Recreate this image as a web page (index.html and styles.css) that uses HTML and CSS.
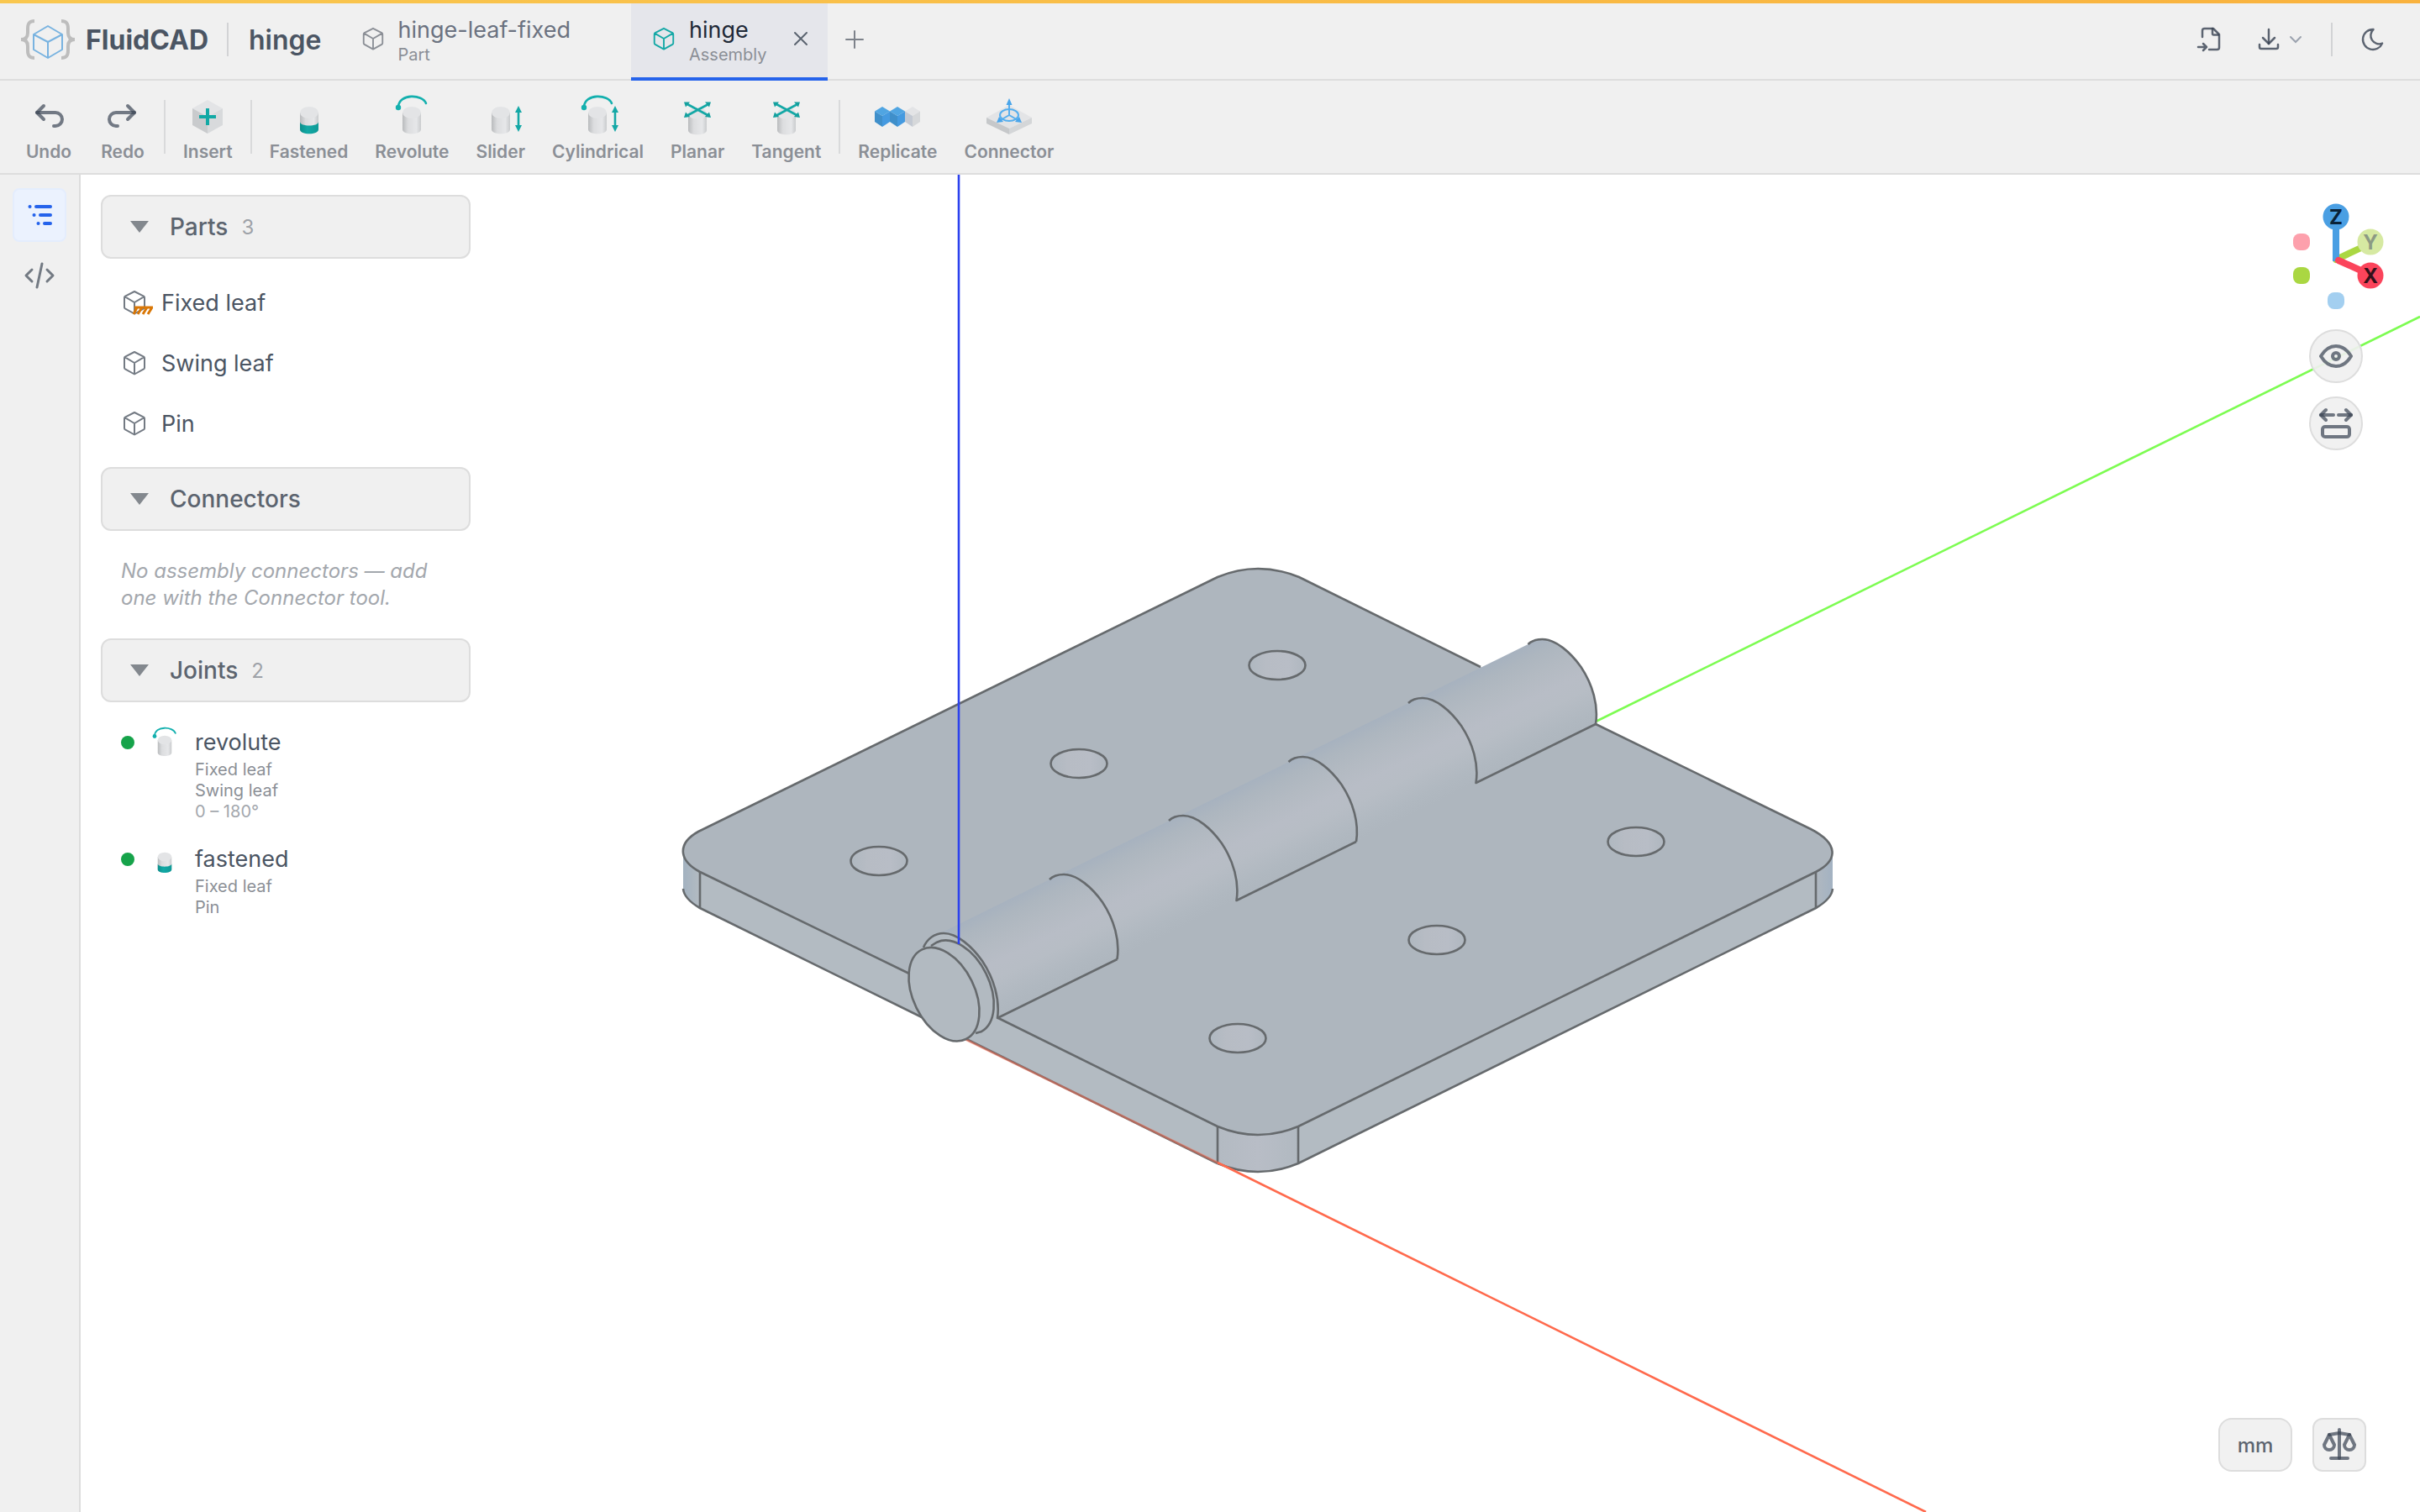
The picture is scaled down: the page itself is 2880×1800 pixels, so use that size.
FILE: index.html
```html
<!DOCTYPE html>
<html lang="en">
<head>
<meta charset="utf-8">
<title>hinge - FluidCAD</title>
<link rel="stylesheet" href="styles.css">
</head>
<body>
<svg class="defs" aria-hidden="true">
  <defs>
    <linearGradient id="metal" x1="0" x2="1" y1="0" y2="0">
      <stop offset="0" stop-color="#b9bbbd"/><stop offset=".3" stop-color="#dcdddf"/><stop offset=".75" stop-color="#e6e7e9"/><stop offset="1" stop-color="#c9cbcd"/>
    </linearGradient>
    <linearGradient id="teal" x1="0" x2="1" y1="0" y2="0">
      <stop offset="0" stop-color="#0c8f8c"/><stop offset=".4" stop-color="#12a9a5"/><stop offset="1" stop-color="#0f9a97"/>
    </linearGradient>
    <symbol id="cube" viewBox="0 0 32 32">
      <path fill="none" stroke="currentColor" stroke-width="2" stroke-linejoin="round" d="M16 3 27 8.600Q28 9.200 28 10.300V21.700Q28 22.800 27 23.400L16 29.500 5 23.400Q4 22.800 4 21.700V10.300Q4 9.200 5 8.600ZM4.500 9.200 16 16 27.500 9.200M16 16V29.500"/>
    </symbol>
    <symbol id="cylinder" viewBox="0 0 48 48">
      <path fill="url(#metal)" d="M13 20V40C13 47 35 47 35 40V20Z"/>
      <ellipse cx="24" cy="20" rx="11" ry="7" fill="#e3e4e6"/>
    </symbol>
    <symbol id="fasten" viewBox="0 0 48 48">
      <use href="#cylinder"/>
      <path fill="url(#teal)" d="M13 31C13 37 35 37 35 31V40C35 47 13 47 13 40Z"/>
    </symbol>
    <symbol id="cross" viewBox="0 0 48 48">
      <use href="#cylinder" y="1"/>
      <path fill="none" stroke="#14a8a6" stroke-width="2.600" d="M11 9.500 38 24M38 9.500 11 24"/>
      <path fill="#14a09e" d="M8 7.500H15L10 13.500ZM40 7.500H33L38 13.500ZM8 26 10 19.500 15 25ZM40 26 38 19.500 33 25Z"/>
    </symbol>
    <symbol id="caret" viewBox="0 0 24 16"><path fill="#83888e" d="M1 1H23L12 15Z"/></symbol>
  </defs>
</svg>

<header class="topbar">
  <div class="brand">
    <svg class="brand-mark" viewBox="0 0 66 50" fill="none" aria-hidden="true">
      <g stroke="#bdbdbd" stroke-width="4"><path d="M17 3C10 3 9 7 9 12V17C9 22 7 25 1 25C7 25 9 28 9 33V38C9 43 10 47 17 47"/><path d="M49 3C56 3 57 7 57 12V17C57 22 59 25 65 25C59 25 57 28 57 33V38C57 43 56 47 49 47"/></g>
      <path stroke="#79b3e0" stroke-width="2" stroke-linejoin="round" d="M33 9 50 19V37L33 47 16 37V19ZM16 19 33 28 50 19M33 28V47"/>
    </svg>
    <span class="brand-name">FluidCAD</span>
  </div>
  <span class="rule"></span>
  <h1 class="project">hinge</h1>
  <nav class="tabs" aria-label="Open files">
    <div class="tab">
      <svg class="tab-icon" aria-hidden="true"><use href="#cube"/></svg>
      <button class="tab-label"><span class="tab-name">hinge-leaf-fixed</span><span class="tab-kind">Part</span></button>
      <button class="tab-close" aria-label="Close hinge-leaf-fixed"><svg viewBox="0 0 24 24"><path d="M5 5 19 19M19 5 5 19"/></svg></button>
    </div>
    <div class="tab active">
      <svg class="tab-icon" aria-hidden="true"><use href="#cube"/></svg>
      <button class="tab-label"><span class="tab-name">hinge</span><span class="tab-kind">Assembly</span></button>
      <button class="tab-close" aria-label="Close hinge"><svg viewBox="0 0 24 24"><path d="M5 5 19 19M19 5 5 19"/></svg></button>
    </div>
    <button class="tab-add" aria-label="New tab"><svg viewBox="0 0 24 24"><path d="M12 2V22M2 12H22"/></svg></button>
  </nav>
  <div class="actions">
    <button aria-label="Import"><svg class="line" viewBox="0 0 32 32"><path d="M9 13V5.500A2.500 2.500 0 0 1 11.500 3H22L29 10V25.500A2.500 2.500 0 0 1 26.500 28H17"/><path d="M21 3V9A1.500 1.500 0 0 0 22.500 10.500H28"/><path d="M4 25H14M10 21 14 25 10 29"/></svg></button>
    <button class="export" aria-label="Export"><svg class="line" viewBox="0 0 32 32"><path d="M16 4V21"/><path d="M9 14 16 21 23 14"/><path d="M5 22V25A2 2 0 0 0 7 27H25A2 2 0 0 0 27 25V22"/></svg><svg class="chevron" viewBox="0 0 16 16"><path d="M2 5 8 11 14 5"/></svg></button>
    <span class="rule"></span>
    <button aria-label="Dark mode"><svg class="line moon" viewBox="0 0 24 24"><path d="M12 3c.132 0 .263 0 .393 0a7.500 7.500 0 0 0 7.920 12.446a9 9 0 1 1-8.313-12.454z"/></svg></button>
  </div>
</header>

<div class="toolbar" role="toolbar" aria-label="Assembly tools">
  <button class="tool"><svg class="arrow" viewBox="0 0 24 24"><path d="M9 14 5 10 9 6"/><path d="M5 10H16A4 4 0 1 1 16 18H15"/></svg><span>Undo</span></button>
  <button class="tool"><svg class="arrow" viewBox="0 0 24 24"><path d="M15 14 19 10 15 6"/><path d="M19 10H8A4 4 0 1 0 8 18H9"/></svg><span>Redo</span></button>
  <span class="split"></span>
  <button class="tool"><svg viewBox="0 0 48 48"><path fill="#e3e4e6" d="M24 5 42 15 24 25 6 15Z"/><path fill="#c9cbcd" d="M6 15 24 25V45L6 35Z"/><path fill="#d8dadc" d="M42 15 24 25V45L42 35Z"/><path stroke="#12a9a5" stroke-width="4" d="M24 15V35M14 25H34"/></svg><span>Insert</span></button>
  <span class="split"></span>
  <button class="tool"><svg><use href="#fasten"/></svg><span>Fastened</span></button>
  <button class="tool"><svg viewBox="0 0 48 48"><use href="#cylinder"/><path fill="none" stroke="#14b0ae" stroke-width="2.600" stroke-linecap="round" d="M8 13C9-3 37-2 41 9"/><circle cx="8" cy="14" r="3.200" fill="#14b0ae"/></svg><span>Revolute</span></button>
  <button class="tool"><svg viewBox="0 0 48 48"><use href="#cylinder"/><path stroke="#14a8a6" stroke-width="2.600" d="M45 17V39"/><path fill="#14a8a6" d="M45 12 49 20H41ZM45 43 49 35H41Z"/></svg><span>Slider</span></button>
  <button class="tool"><svg viewBox="0 0 48 48"><use href="#cylinder"/><path fill="none" stroke="#14b0ae" stroke-width="2.600" stroke-linecap="round" d="M8 13C9-3 37-2 41 9"/><circle cx="8" cy="14" r="3.200" fill="#14b0ae"/><path stroke="#14a8a6" stroke-width="2.600" d="M45 17V39"/><path fill="#14a8a6" d="M45 12 49 20H41ZM45 43 49 35H41Z"/></svg><span>Cylindrical</span></button>
  <button class="tool"><svg><use href="#cross"/></svg><span>Planar</span></button>
  <button class="tool"><svg><use href="#cross"/></svg><span>Tangent</span></button>
  <span class="split"></span>
  <button class="tool"><svg viewBox="0 0 48 48">
    <g><path fill="#e3e4e6" d="M42 13 51 18.500 42 24 33 18.500Z"/><path fill="#c3c9d3" d="M33 18.500 42 24V37L33 31Z"/><path fill="#d6d8da" d="M51 18.500 42 24V37L51 31Z"/></g>
    <g><path fill="#50a5e2" d="M24 13 33 18.500 24 24 15 18.500Z"/><path fill="#3f8fca" d="M15 18.500 24 24V37L15 31Z"/><path fill="#459ae0" d="M33 18.500 24 24V37L33 31Z"/></g>
    <g><path fill="#50a5e2" d="M6 13 15 18.500 6 24-3 18.500Z"/><path fill="#3f8fca" d="M-3 18.500 6 24V37L-3 31Z"/><path fill="#459ae0" d="M15 18.500 6 24V37L15 31Z"/></g>
  </svg><span>Replicate</span></button>
  <button class="tool"><svg viewBox="0 0 48 48"><path fill="#e3e4e6" d="M24 11 51 26 24 39-3 26Z"/><path fill="#c6c8ca" d="M-3 26 24 39V46L-3 33Z"/><path fill="#d4d6d8" d="M51 26 24 39V46L51 33Z"/><g fill="none" stroke="#55aeee" stroke-width="2"><ellipse cx="24" cy="23" rx="11" ry="7"/><path d="M24 23V8M24 23 12 30M24 23 36 30"/></g><path fill="#4aa5ea" d="M24 3 27.500 11H20.500ZM9 32 12 25 17 31ZM39 32 36 25 31 31Z"/></svg><span>Connector</span></button>
</div>

<div class="workspace">
  <nav class="rail" aria-label="Panels">
    <button class="rail-button active" aria-label="Assembly tree"><svg viewBox="0 0 32 32"><path d="M12 6H29M17 16H29M22 26H29M4.500 6H4.600M9.500 16H9.600M14.500 26H14.600"/></svg></button>
    <button class="rail-button" aria-label="Code"><svg viewBox="0 0 32 32"><path d="M7 9 0 16 7 23M25 9 32 16 25 23M19 2 13 30"/></svg></button>
  </nav>

  <main class="viewport">
    <svg class="scene" viewBox="96 208 2784 1592" preserveAspectRatio="xMidYMid slice" role="img" aria-label="Hinge assembly">
      <defs>
        <linearGradient id="barrel" gradientUnits="userSpaceOnUse" x1="1107" y1="1117" x2="1160" y2="1225">
          <stop offset="0" stop-color="#a7b2bf"/><stop offset=".12" stop-color="#adb6bf"/><stop offset=".3" stop-color="#b3bac2"/><stop offset=".5" stop-color="#b8bdc6"/><stop offset=".65" stop-color="#b7bdc5"/><stop offset=".88" stop-color="#b0b8c0"/><stop offset="1" stop-color="#aeb6be"/>
        </linearGradient>
        <linearGradient id="hole"><stop offset="0" stop-color="#afb8c0"/><stop offset=".3" stop-color="#b7bcc4"/><stop offset=".7" stop-color="#b8bdc6"/><stop offset="1" stop-color="#afb7bf"/></linearGradient>
        <linearGradient id="round"><stop offset="0" stop-color="#b3bac2"/><stop offset=".5" stop-color="#b8bdc6"/><stop offset="1" stop-color="#b1b9c1"/></linearGradient>
        <linearGradient id="sideLeft"><stop offset="0" stop-color="#a3b2c0"/><stop offset="1" stop-color="#b3bbc2"/></linearGradient>
        <linearGradient id="sideRight"><stop offset="0" stop-color="#b0b8c0"/><stop offset="1" stop-color="#a3b2c2"/></linearGradient>
      </defs>

      <path class="axis green" d="M1899 859 2880 377"/>
      <!-- plate sides -->
      <path fill="#b3bbc2" d="M833 1038 1190 1212 1449 1341H1545L2161 1038V1081L1545 1385H1449L1120 1223 833 1081Z"/>
      <path fill="url(#sideLeft)" d="M813 1014V1058Q814 1070 833 1081V1036Z"/>
      <path fill="url(#sideRight)" d="M2181 1014V1058Q2180 1070 2161 1081V1036Z"/>
      <path fill="url(#round)" d="M1449 1340V1385Q1497 1405 1545 1385V1340Z"/>
      <!-- plate top faces -->
      <path fill="#aeb6be" d="M833 1038C807 1024 806 1004 831 990L1449 687Q1497 667 1546 687L1762 794 1899 862 2155 987C2188 1004 2188 1024 2161 1038L1545 1341Q1497 1361 1449 1341L1188 1212 1082 1159Z"/>
      <path class="edge" d="M1082 1159 833 1038C807 1024 806 1004 831 990L1449 687Q1497 667 1546 687L1762 794M1899 862 2155 987C2188 1004 2188 1024 2161 1038L1545 1341Q1497 1361 1449 1341L1188 1212"/>
      <path class="edge" d="M1097 1211 833 1081Q814 1070 813 1058M1449 1385Q1497 1405 1545 1385L2161 1081Q2180 1070 2181 1058M833 1038V1081M2161 1038V1081M1449 1341V1385M1545 1341V1385"/>
      <path class="edge" d="M1140 1232 1449 1385"/>
      <path class="axis red" d="M1140 1233 1449 1384" opacity=".5"/>
      <path class="axis red" d="M1449 1384 2292 1800"/>
      <g class="edge" style="fill:url(#hole)">
        <ellipse cx="1046" cy="1025" rx="33.500" ry="17"/><ellipse cx="1284" cy="909" rx="33.500" ry="17"/><ellipse cx="1520" cy="792" rx="33.500" ry="17"/>
        <ellipse cx="1473" cy="1236" rx="33.500" ry="17"/><ellipse cx="1710" cy="1119" rx="33.500" ry="17"/><ellipse cx="1947" cy="1002" rx="33.500" ry="17"/>
      </g>
      <!-- barrel -->
      <path fill="#b3bbc2" d="M1099 1128C1103 1118 1112 1111 1123 1111c16 0 34 16 46 33 14 21 21 46 18 68L1150 1230Z"/>
      <path fill="url(#barrel)" d="M1107 1117 1818.500 767c5-5 11-6 17-6 16 0 34 16 46 33 14 21 21 46 17.500 68L1187 1212c3-22-4-47-18-68C1157 1127 1139 1111 1123 1111Z"/>
      <path class="edge" d="M1099 1128C1103 1118 1112 1111 1123 1111c16 0 34 16 46 33 14 21 21 46 18 68L1329.500 1142"/>
      <path class="edge" d="M1249 1047c5-5 11-6 17-6 16 0 34 16 46 33 14 21 21 46 17.500 68"/>
      <path class="edge" d="M1391 977c5-5 11-6 17-6 16 0 34 16 46 33 14 21 21 46 17.500 68L1614 1002"/>
      <path class="edge" d="M1533.500 907c5-5 11-6 17-6 16 0 34 16 46 33 14 21 21 46 17.500 68"/>
      <path class="edge" d="M1676 837c5-5 11-6 17-6 16 0 34 16 46 33 14 21 21 46 17.500 68L1899 862"/>
      <path class="edge" d="M1818.500 767c5-5 11-6 17-6 16 0 34 16 46 33 14 21 21 46 17.500 68"/>
      <!-- pin head -->
      <path fill="#b2bac1" d="M1097.300 1130.400 1108 1126 1115.100 1121.700A59.400 36.600 63.850 0 1 1167.500 1228.300L1149.700 1237Z"/>
      <path class="edge" d="M1108 1126 1115.100 1121.700A59.400 36.600 63.850 0 1 1167.500 1228.300L1161 1230"/>
      <ellipse class="edge" cx="1123.500" cy="1183.700" rx="59.400" ry="36.600" transform="rotate(63.850 1123.500 1183.700)" style="fill:#b2bac1"/>
      <path class="axis blue" d="M1141 208V1124"/>
    </svg>

    <aside class="tree">
      <section>
        <button class="group" aria-expanded="true"><svg class="caret"><use href="#caret"/></svg>Parts<span class="count">3</span></button>
        <ul class="parts">
          <li><svg viewBox="0 0 32 32"><use href="#cube"/><path fill="none" stroke="#d97706" stroke-width="3" d="M16 22H38M19 22 15 30M25 22 20 30M31 22 26 30M37 22 32 30"/></svg>Fixed leaf</li>
          <li><svg viewBox="0 0 32 32"><use href="#cube"/></svg>Swing leaf</li>
          <li><svg viewBox="0 0 32 32"><use href="#cube"/></svg>Pin</li>
        </ul>
      </section>
      <section>
        <button class="group" aria-expanded="true"><svg class="caret"><use href="#caret"/></svg>Connectors</button>
        <p class="empty">No assembly connectors — add one with the Connector tool.</p>
      </section>
      <section>
        <button class="group" aria-expanded="true"><svg class="caret"><use href="#caret"/></svg>Joints<span class="count">2</span></button>
        <ul class="joints">
          <li><span class="status"></span><svg viewBox="0 0 48 48"><use href="#cylinder"/><path fill="none" stroke="#14b0ae" stroke-width="2.600" stroke-linecap="round" d="M8 13C9-3 37-2 41 9"/><circle cx="8" cy="14" r="3.200" fill="#14b0ae"/></svg>
            <div><h2>revolute</h2><p>Fixed leaf</p><p>Swing leaf</p><p class="range">0 – 180°</p></div></li>
          <li><span class="status"></span><svg><use href="#fasten"/></svg>
            <div><h2>fastened</h2><p>Fixed leaf</p><p>Pin</p></div></li>
        </ul>
      </section>
    </aside>

    <div class="view-tools">
      <svg class="gizmo" viewBox="0 0 112 128" role="img" aria-label="View orientation">
        <g stroke-width="8" stroke-linecap="round"><path stroke="#aad742" d="M56 69 88 54"/><path stroke="#4a9fe3" stroke-linecap="butt" d="M56 71V18"/><path stroke="#fb445b" d="M59 70 90 84"/></g>
        <circle cx="56" cy="18" r="15.500" fill="#4a9fe3"/><circle cx="97" cy="48" r="15.500" fill="#d6e9a2"/><circle cx="97" cy="88" r="15.500" fill="#fb445b"/>
        <g><rect x="5" y="38" width="20" height="20" rx="8" fill="#fda0ac"/><rect x="5" y="78" width="20" height="20" rx="8" fill="#aad742"/><rect x="46" y="108" width="20" height="20" rx="8" fill="#a3cff0"/></g>
        <text x="56" y="27" fill="#0a2238">Z</text><text x="97" y="57" fill="#8c9a84">Y</text><text x="97" y="97" fill="#35101a">X</text>
      </svg>
      <button class="round-button" aria-label="Visibility"><svg class="bold" viewBox="0 0 24 24"><circle cx="12" cy="12" r="2"/><path d="M21 12C18.600 16 15.600 18 12 18C8.400 18 5.400 16 3 12C5.400 8 8.400 6 12 6C15.600 6 18.600 8 21 12Z"/></svg></button>
      <button class="round-button" aria-label="Exploded view"><svg class="bold" viewBox="0 0 24 24"><path d="M3 7H10.500M13.500 7H21"/><path d="M6 4 3 7 6 10M18 4 21 7 18 10"/><rect x="4" y="14" width="16" height="6" rx="1.500"/></svg></button>
    </div>

    <div class="units">
      <button class="unit">mm</button>
      <button class="scale" aria-label="Mass properties"><svg class="bold" viewBox="0 0 24 24"><path d="M7 20H17"/><path d="M6 6 12 5 18 6"/><path d="M12 3V20"/><path d="M9 12 6 6 3 12A3 3 0 0 0 9 12"/><path d="M21 12 18 6 15 12A3 3 0 0 0 21 12"/></svg></button>
    </div>
  </main>
</div>
</body>
</html>
```

FILE: styles.css
```css
* { box-sizing: border-box; }

body {
  margin: 0;
  min-height: 100vh;
  display: flex;
  flex-direction: column;
  background: #fff;
  color: #4b5563;
  font-family: Inter, "Liberation Sans", sans-serif;
  font-size: 27px;
}

button {
  margin: 0;
  padding: 0;
  border: 0;
  background: none;
  color: inherit;
  font: inherit;
  text-align: left;
  cursor: pointer;
}

h1, h2, p, ul { margin: 0; padding: 0; }
ul { list-style: none; }
svg { display: block; flex: none; overflow: visible; }
symbol { overflow: visible; }
.defs { position: absolute; width: 0; height: 0; }

/* Top bar */
.topbar {
  position: relative;
  display: flex;
  align-items: center;
  height: 96px;
  padding-left: 24px;
  padding-right: 40px;
  border-bottom: 2px solid #dddddd;
  background: #f0f0f0;
}
.topbar::before {
  content: "";
  position: absolute;
  inset: 0 0 auto;
  height: 4px;
  background: linear-gradient(90deg, #f9c74f, #f9b23e);
}
.brand { display: flex; align-items: center; gap: 12px; }
.brand-mark { width: 66px; height: 50px; }
.brand-name, .project {
  padding-top: 2px;
  font-size: 32px;
  line-height: 40px;
  font-weight: 700;
  color: #4b5563;
}
.project { font-weight: 600; }
.rule { width: 2px; height: 40px; background: #d2d3d5; }
.brand + .rule { margin: 0 24px 0 22px; }

.tabs { display: flex; align-self: stretch; margin-left: 22px; }
.tab {
  display: flex;
  align-items: center;
  margin-bottom: -2px;
  padding: 0 20px 0 24px;
  border-bottom: 4px solid transparent;
  color: #6b7280;
}
.tab-icon { width: 30px; height: 30px; margin-right: 15px; color: #8b8f96; }
.tab-label { display: flex; flex-direction: column; padding-top: 4px; }
.tab-name { line-height: 34px; }
.tab-kind { font-size: 20px; line-height: 24px; color: #8b8f96; }
.tab-close { margin-left: 28px; visibility: hidden; }
.tab-close svg { width: 24px; height: 24px; }
.tab-close path, .tab-add path { fill: none; stroke: #5b6470; stroke-width: 2; stroke-linecap: round; }
.tab.active { background: #e5e6eb; border-color: #2563eb; color: #1f2937; }
.tab.active .tab-icon { color: #14a8a6; }
.tab.active .tab-close { visibility: visible; }
.tab-add { padding: 0 20px; }
.tab-add svg { width: 24px; height: 24px; }
.tab-add path { stroke: #7d828a; }

.actions { display: flex; align-items: center; margin-left: auto; }
.actions button { display: flex; align-items: center; }
.actions .line { width: 32px; height: 32px; }
.export { gap: 8px; margin-left: 40px; }
.chevron { width: 16px; height: 16px; }
.chevron path { fill: none; stroke: #9ca3af; stroke-width: 2; stroke-linecap: round; }
.actions .rule { margin: 0 32px 0 34px; }
.line path { fill: none; stroke: #374151; stroke-opacity: .8; stroke-width: 2.500; stroke-linecap: round; stroke-linejoin: round; }
.moon path { stroke-width: 1.800; }

/* Toolbar */
.toolbar {
  display: flex;
  align-items: center;
  min-height: 112px;
  padding: 0 14px;
  border-bottom: 2px solid #dddddd;
  background: #f0f0f0;
}
.tool {
  display: flex;
  flex-direction: column;
  align-items: center;
  gap: 6px;
  min-width: 88px;
  padding: 6px 16px 0;
  color: #8b8f96;
  font-size: 21px;
  line-height: 26px;
  font-weight: 600;
}
.tool svg { width: 48px; height: 48px; }
.arrow path { fill: none; stroke: #374151; stroke-opacity: .68; stroke-width: 2; stroke-linecap: round; stroke-linejoin: round; }
.split { width: 2px; height: 64px; margin: 0 5px; background: #d9dadb; }

/* Workspace */
.workspace { flex: 1; display: flex; }
.rail {
  display: flex;
  flex-direction: column;
  align-items: center;
  gap: 8px;
  width: 96px;
  padding-top: 16px;
  border-right: 2px solid #dddddd;
  background: #f0f0f0;
}
.rail-button {
  display: flex;
  align-items: center;
  justify-content: center;
  width: 64px;
  height: 64px;
  border: 2px solid transparent;
  border-radius: 8px;
}
.rail-button.active { background: #ebf2fe; border-color: #e4edfd; }
.rail-button svg { width: 32px; height: 32px; }
.rail-button path { fill: none; stroke: #737a83; stroke-width: 3; stroke-linecap: round; stroke-linejoin: round; }
.rail-button.active path { stroke: #2563eb; stroke-width: 4; }

.viewport {
  flex: 1;
  display: grid;
  grid-template: auto 1fr auto / auto 1fr auto;
  position: relative;
  min-width: 0;
}
.scene { position: absolute; inset: 0; width: 100%; height: 100%; overflow: hidden; }
.axis { fill: none; stroke-width: 2.600; }
.green { stroke: #7dfc52; }
.red { stroke: #ff6a4d; }
.blue { stroke: #2c42ee; }
.edge { fill: none; stroke: #666a6d; stroke-width: 2.600; stroke-linejoin: round; }

/* Assembly tree */
.tree { grid-area: 1 / 1 / 3 / 2; position: relative; width: 440px; margin: 24px; }
.group {
  display: flex;
  align-items: center;
  width: 100%;
  height: 76px;
  padding: 0 32px;
  border: 2px solid #dddddd;
  border-radius: 12px;
  background: #f0f0f0;
  color: #5c646f;
  font-size: 28px;
  font-weight: 500;
}
.caret { width: 24px; height: 16px; margin-right: 24px; }
.count { margin-left: 16px; color: #9ea2a8; font-size: 24px; font-weight: 400; }
.parts { padding: 16px 24px; }
.parts li { display: flex; align-items: center; gap: 16px; height: 72px; color: #4b5563; }
.parts svg { width: 32px; height: 32px; color: #737a83; }
.empty { padding: 32px 24px; color: #a3a7ad; font-size: 24px; line-height: 32px; font-style: italic; }
.joints { padding: 16px 24px; }
.joints li { display: flex; align-items: flex-start; padding: 12px 0; }
.status { flex: none; width: 16px; height: 16px; margin: 12px 18px 0 0; border-radius: 50%; background: #16a34a; }
.joints svg { width: 36px; height: 36px; margin: 2px 18px 0 0; }
.joints h2 { font-size: 27px; line-height: 40px; font-weight: 400; color: #4b5563; }
.joints p { font-size: 20px; line-height: 25px; color: #8b8f96; }
.joints .range { color: #a3a7ad; }

/* View controls */
.view-tools {
  grid-area: 1 / 3;
  position: relative;
  display: flex;
  flex-direction: column;
  align-items: center;
  gap: 16px;
  padding: 32px 44px 0 0;
}
.gizmo { width: 112px; height: 128px; margin-bottom: 8px; }
.gizmo text { font-size: 24px; font-weight: 700; text-anchor: middle; }
.round-button, .scale, .unit {
  display: flex;
  align-items: center;
  justify-content: center;
  height: 64px;
  border: 2px solid #dddddd;
  background: rgba(240, 240, 240, .92);
}
.round-button { width: 64px; border-radius: 50%; }
.bold { width: 48px; height: 48px; fill: none; stroke: #374151; stroke-opacity: .7; stroke-width: 2; stroke-linecap: round; stroke-linejoin: round; }
.units { grid-area: 3 / 2 / 4 / 4; position: relative; justify-self: end; display: flex; gap: 24px; margin: 0 64px 48px 0; }
.unit { width: 88px; border-radius: 16px; color: #5c646f; font-size: 24px; font-weight: 500; }
.scale { width: 64px; border-radius: 12px; }
```
